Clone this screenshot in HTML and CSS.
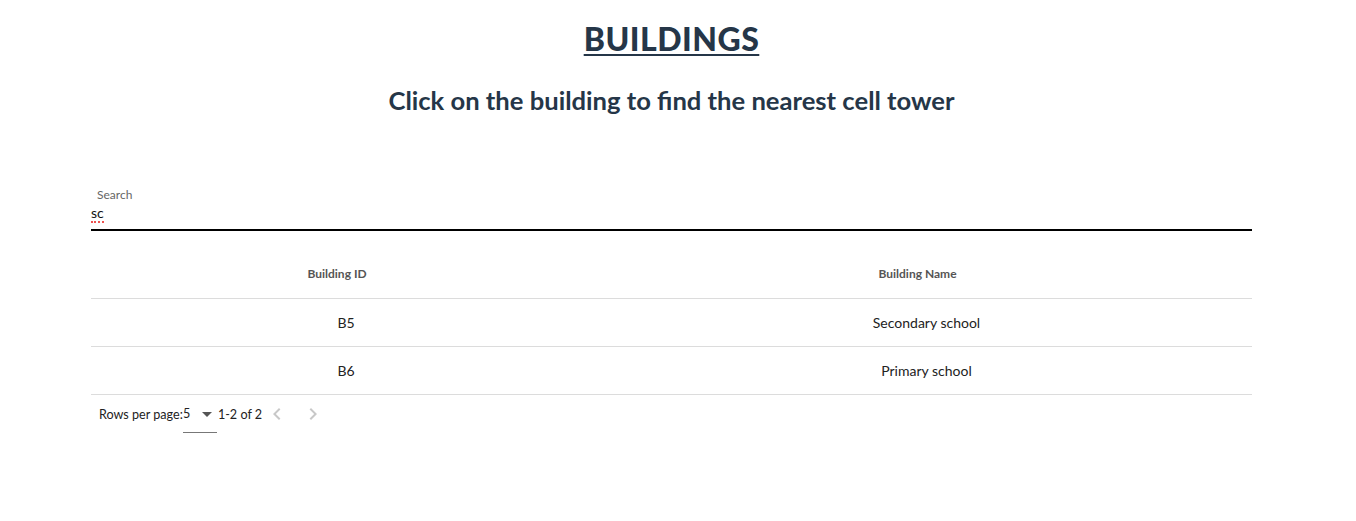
FILE: index.html
```html
<!DOCTYPE html>
<html>
<head>
<meta charset="utf-8">
<link rel="stylesheet" href="styles.css">
</head>
<body>
<div class="page">
  <h1 class="title">BUILDINGS</h1>
  <h2 class="subtitle">Click on the building to find the nearest cell tower</h2>
  <div class="panel">
    <div class="search">
      <label class="search-label">Search</label>
      <div class="search-input"><span class="typed">sc</span></div>
    </div>
    <table class="grid">
      <thead>
        <tr><th class="c1">Building ID<span class="sort"></span></th><th class="c2">Building Name<span class="sort"></span></th></tr>
      </thead>
      <tbody>
        <tr><td>B5</td><td>Secondary school</td></tr>
        <tr><td>B6</td><td>Primary school</td></tr>
      </tbody>
    </table>
    <div class="pager">
      <span class="rpp">Rows per page:</span>
      <span class="select"><span class="sel-val">5</span><svg class="caret" width="10" height="5" viewBox="0 0 10 5"><path d="M0 0h10L5 5z" fill="#555"/></svg></span>
      <span class="range">1-2 of 2</span>
      <svg class="chev" width="24" height="24" viewBox="0 0 24 24"><path d="M15.41 7.41 14 6l-6 6 6 6 1.41-1.41L10.83 12z" fill="#c8c8c8"/></svg>
      <svg class="chev" width="24" height="24" viewBox="0 0 24 24"><path d="M10 6 8.59 7.41 13.17 12l-4.58 4.59L10 18l6-6z" fill="#c8c8c8"/></svg>
    </div>
  </div>
</div>
</body>
</html>
```
FILE: styles.css
```css
html, body { margin: 0; padding: 0; background: #fff; }
body { font-family: Lato, "Open Sans", sans-serif; color: #222; }
.page { width: 1343px; display: flex; flex-direction: column; align-items: center; }
.title {
  margin: 20px 0 0;
  font-size: 32px;
  font-weight: 900;
  color: #253648;
  text-decoration: underline;
  text-decoration-thickness: 2px;
  text-underline-offset: 3px;
  letter-spacing: 0.5px;
  line-height: 38px;
}
.subtitle {
  margin: 27px 0 0;
  font-size: 25.6px;
  font-weight: 700;
  color: #253648;
  line-height: 30px;
}
.panel { width: 1161px; margin-top: 73px; }
.search { display: flex; flex-direction: column; }
.search-label { font-size: 12px; color: #666; padding-left: 6px; line-height: 14px; }
.search-input {
  margin-top: 4px;
  height: 23px;
  border-bottom: 2px solid #000;
  font-size: 14px;
  line-height: 14px;
  color: #111;
}
.typed {
  display: inline-block;
  line-height: 14px;
  padding-bottom: 1px;
  border-bottom: 2px dotted #ef5350;
}
.grid { width: 100%; border-collapse: collapse; margin-top: 18px; }
.grid th, .grid td { text-align: center; border-bottom: 1px solid #dcdcdc; padding: 0; }
.grid th { height: 49px; font-size: 12px; font-weight: 700; color: #555; }
.grid th .sort { display: inline-block; width: 18px; }
.grid td { height: 46px; padding-bottom: 1px; font-size: 14px; color: #222; }
.grid .c1 { width: 510px; }
.pager { display: flex; align-items: center; height: 38px; padding-left: 8px; font-size: 12.6px; color: #222; }
.select { display: flex; align-items: center; width: 34px; height: 38px; border-bottom: 1px solid #777; box-sizing: border-box; }
.sel-val { margin-right: 12px; }
.caret { margin-top: 2px; }
.range { margin-left: 1px; }
.chev { margin-left: 3px; }
.chev + .chev { margin-left: 12px; }
```
